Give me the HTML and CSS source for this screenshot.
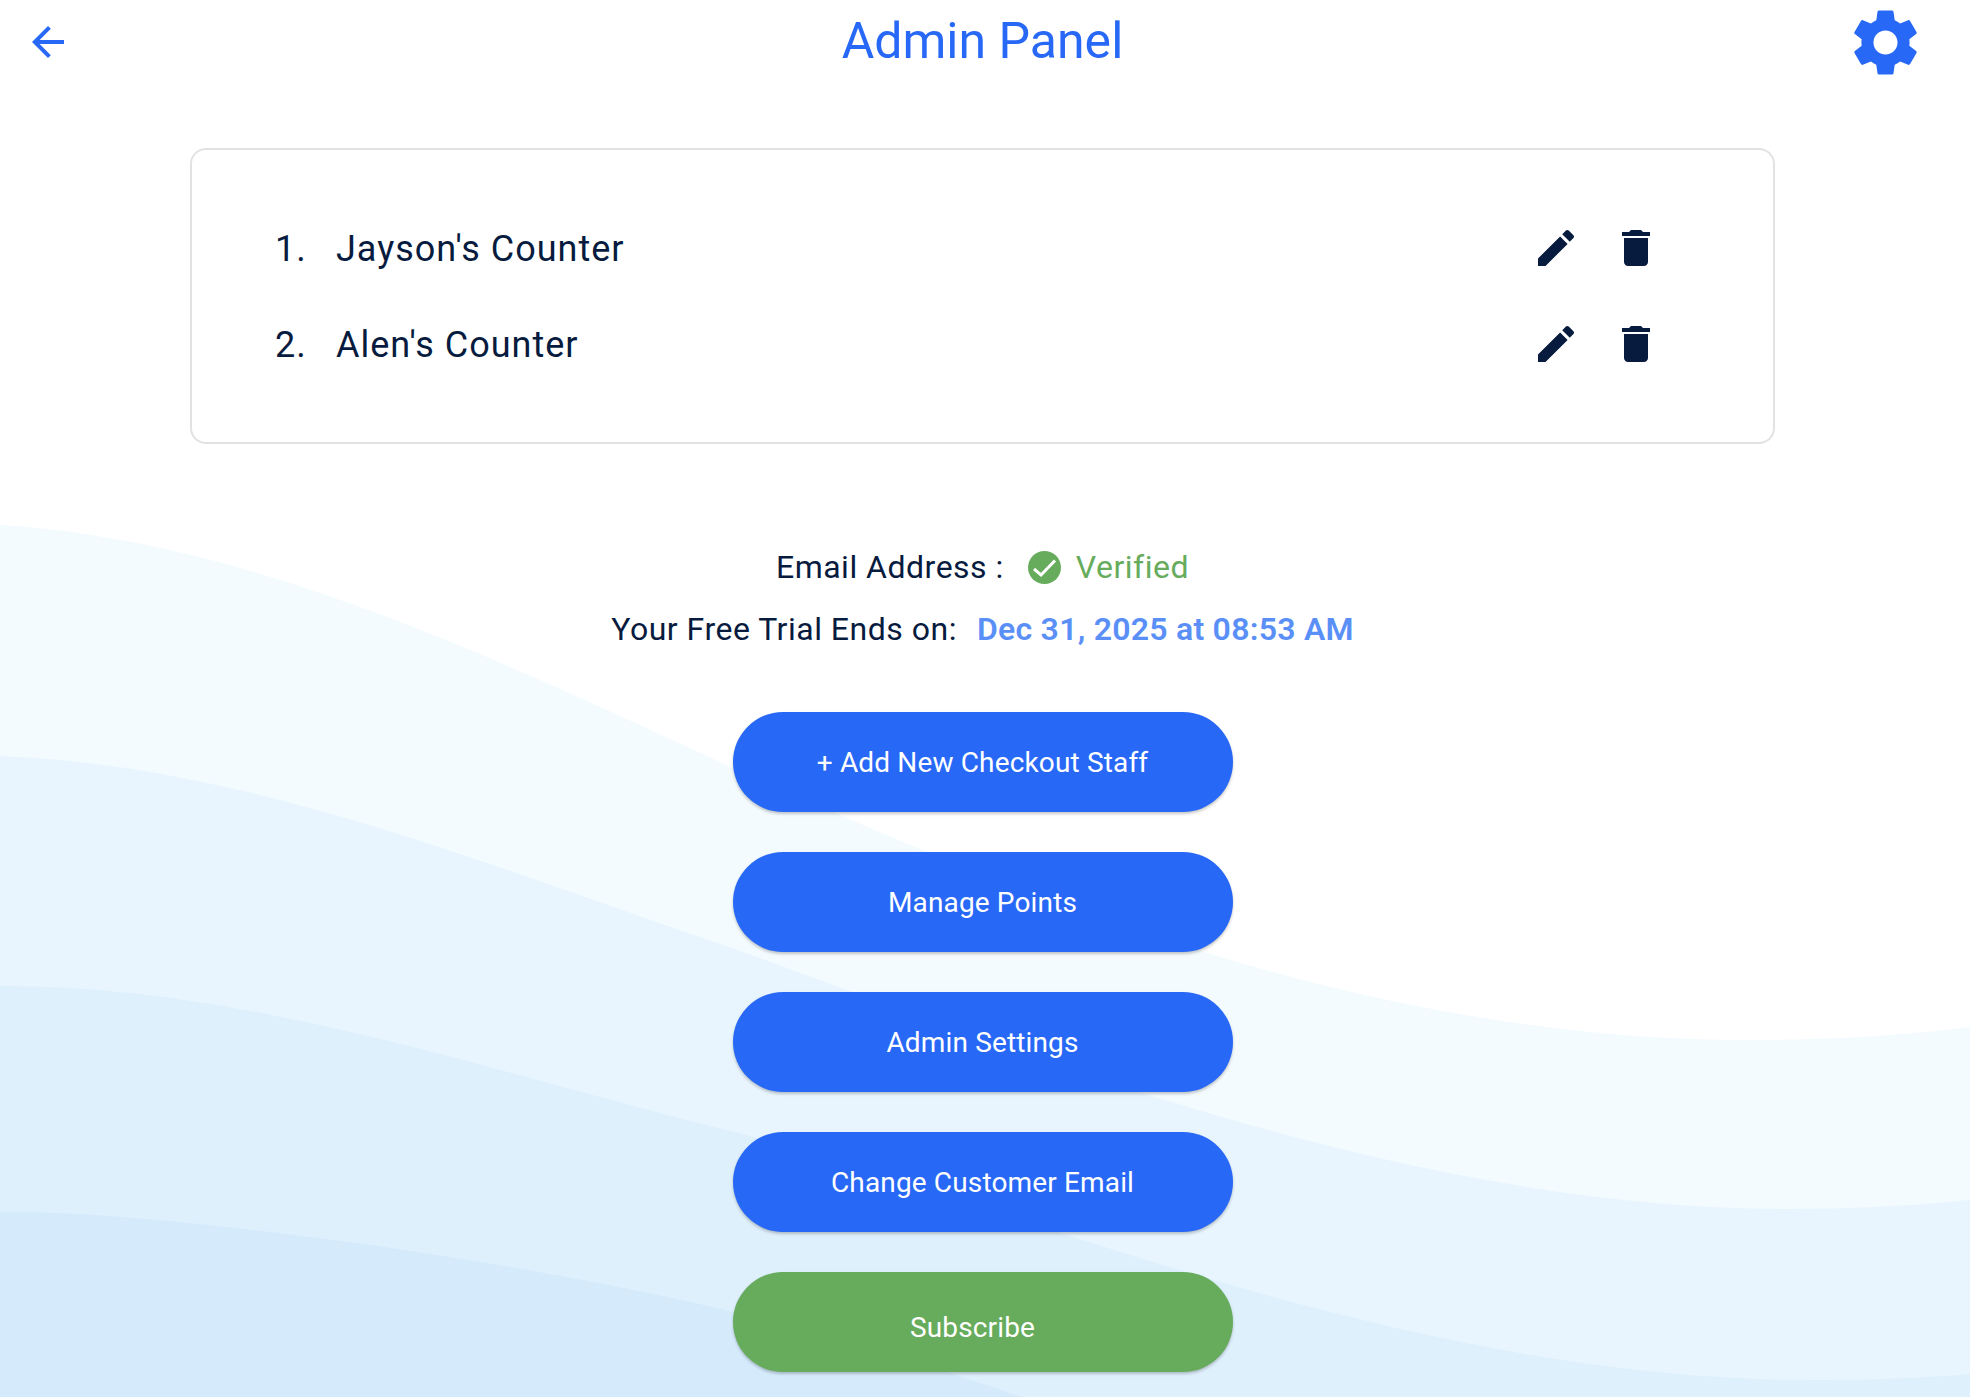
FILE: index.html
```html
<!DOCTYPE html>
<html lang="en">
<head>
<meta charset="utf-8">
<title>Admin Panel</title>
<link rel="stylesheet" href="styles.css">
</head>
<body>
<svg class="waves" viewBox="0 0 1970 1397" preserveAspectRatio="none" aria-hidden="true">
  <path class="wave-1" d="M0 525C250 540 500 660 735 769C1000 886 1350 1040 1750 1040C1830 1040 1900 1036 1970 1027V1397H0Z"/>
  <path class="wave-2" d="M0 756C250 765 500 870 735 949C1000 1045 1400 1209 1788 1209C1850 1209 1910 1206 1970 1200V1397H0Z"/>
  <path class="wave-3" d="M0 986C250 985 500 1075 735 1132C1000 1200 1400 1380 1812 1380C1870 1380 1920 1378 1970 1374V1397H0Z"/>
  <path class="wave-4" d="M0 1212C100 1208 450 1245 735 1312C850 1339 950 1372 1021 1397H0Z"/>
</svg>
<div class="page">
  <header class="topbar">
    <button class="icon-btn" aria-label="Back">
      <svg class="icon-back" viewBox="0 0 24 24"><path d="M20 11H7.830l5.590-5.590L12 4l-8 8 8 8 1.410-1.410L7.830 13H20v-2z"/></svg>
    </button>
    <h1 class="title">Admin Panel</h1>
    <button class="icon-btn icon-btn-end" aria-label="Settings">
      <svg class="icon-gear" viewBox="0 0 24 24"><path d="M19.43 12.98c.04-.32.07-.64.07-.98s-.03-.66-.07-.98l2.11-1.65c.19-.15.24-.42.12-.64l-2-3.46c-.12-.22-.39-.3-.61-.22l-2.49 1c-.52-.4-1.08-.73-1.69-.98l-.38-2.65C14.46 2.18 14.25 2 14 2h-4c-.25 0-.46.18-.49.42l-.38 2.65c-.61.25-1.17.59-1.69.98l-2.49-1c-.23-.09-.49 0-.61.22l-2 3.46c-.13.22-.07.49.12.64l2.11 1.65c-.04.32-.07.65-.07.98s.03.66.07.98l-2.11 1.65c-.19.15-.24.42-.12.64l2 3.46c.12.22.39.3.61.22l2.49-1c.52.4 1.08.73 1.69.98l.38 2.65c.03.24.24.42.49.42h4c.25 0 .46-.18.49-.42l.38-2.65c.61-.25 1.17-.59 1.69-.98l2.49 1c.23.09.49 0 .61-.22l2-3.46c.12-.22.07-.49-.12-.64l-2.11-1.65zM12 15.75c-2.07 0-3.75-1.68-3.75-3.75s1.68-3.75 3.75-3.75 3.75 1.68 3.75 3.75-1.68 3.75-3.75 3.75z"/></svg>
    </button>
  </header>

  <section class="card">
    <div class="row">
      <span class="row-num">1.</span>
      <span class="row-name">Jayson's Counter</span>
      <div class="row-actions">
        <svg class="icon-row" viewBox="0 0 24 24"><path d="M3 17.25V21h3.75L17.81 9.94l-3.75-3.75L3 17.25zM20.71 7.04c.39-.39.39-1.02 0-1.41l-2.34-2.34c-.39-.39-1.02-.39-1.41 0l-1.83 1.83 3.75 3.75 1.83-1.83z"/></svg>
        <svg class="icon-row" viewBox="0 0 24 24"><path d="M6 19c0 1.1.9 2 2 2h8c1.1 0 2-.9 2-2V7H6v12zM19 4h-3.500l-1-1h-5l-1 1H5v2h14V4z"/></svg>
      </div>
    </div>
    <div class="row">
      <span class="row-num">2.</span>
      <span class="row-name">Alen's Counter</span>
      <div class="row-actions">
        <svg class="icon-row" viewBox="0 0 24 24"><path d="M3 17.25V21h3.75L17.81 9.94l-3.75-3.75L3 17.25zM20.71 7.04c.39-.39.39-1.02 0-1.41l-2.34-2.34c-.39-.39-1.02-.39-1.41 0l-1.83 1.83 3.75 3.75 1.83-1.83z"/></svg>
        <svg class="icon-row" viewBox="0 0 24 24"><path d="M6 19c0 1.1.9 2 2 2h8c1.1 0 2-.9 2-2V7H6v12zM19 4h-3.500l-1-1h-5l-1 1H5v2h14V4z"/></svg>
      </div>
    </div>
  </section>

  <section class="info">
    <div class="info-line">
      <span>Email Address :</span>
      <svg class="icon-check" viewBox="0 0 33 33"><circle class="check-disc" cx="16.500" cy="16.500" r="16.500"/><polyline class="check-mark" points="6,18 13,24 27,9.500"/></svg>
      <span class="verified">Verified</span>
    </div>
    <div class="info-line">
      <span>Your Free Trial Ends on:</span>
      <span class="trial-date">Dec 31, 2025 at 08:53 AM</span>
    </div>
  </section>

  <nav class="actions">
    <button class="pill">+ Add New Checkout Staff</button>
    <button class="pill">Manage Points</button>
    <button class="pill">Admin Settings</button>
    <button class="pill">Change Customer Email</button>
    <button class="pill pill-green"><span class="pill-offset">Subscribe</span></button>
  </nav>
</div>
</body>
</html>
```
FILE: styles.css
```css
* { box-sizing: border-box; }
html, body { margin: 0; padding: 0; height: 100%; }
body {
  background: #fff;
  font-family: Roboto, "Noto Sans", sans-serif;
  color: #071b3e;
  overflow: hidden;
  position: relative;
}
.waves { position: absolute; inset: 0; width: 100%; height: 100%; display: block; }
.wave-1 { fill: #f3fbff; }
.wave-2 { fill: #e8f5fe; }
.wave-3 { fill: #dff0fd; }
.wave-4 { fill: #d5ebfc; }

.page {
  position: relative;
  display: flex;
  flex-direction: column;
  align-items: center;
  padding-right: 5px;
}

.topbar {
  width: 100%;
  height: 80px;
  display: grid;
  grid-template-columns: 1fr auto 1fr;
  align-items: center;
  padding: 0 24px;
}
.icon-btn { border: 0; background: none; padding: 0; display: flex; justify-self: start; }
.icon-btn-end { justify-self: end; }
.icon-back { width: 48px; height: 48px; fill: #2868f6; margin-top: 3px; }
.icon-gear { width: 77px; height: 77px; fill: #2868f6; margin: 4px 17px 0 0; }
.title {
  margin: 0;
  font-size: 50px;
  font-weight: 400;
  line-height: 78px;
  color: #2868f6;
}

.card {
  margin-top: 68px;
  width: 1585px;
  height: 296px;
  border: 2px solid #e2e2e2;
  border-radius: 16px;
  background: #fff;
  padding: 74px 113px 0 83px;
  display: flex;
  flex-direction: column;
  gap: 48px;
}
.row { display: flex; align-items: center; height: 48px; font-size: 36px; letter-spacing: 1px; }
.row-num { width: 61px; }
.row-name { flex: 1; padding-top: 2px; }
.row-num { padding-top: 2px; }
.row-actions { display: flex; gap: 32px; }
.icon-row { width: 48px; height: 48px; fill: #071b3e; }

.info { margin-top: 104px; display: flex; flex-direction: column; align-items: center; gap: 24px; }
.info-line { display: flex; align-items: center; height: 38px; font-size: 32px; letter-spacing: .5px; }
.icon-check { width: 33px; height: 33px; margin: 0 15px 0 24px; }
.check-disc { fill: #66ac5c; }
.check-mark { fill: none; stroke: #fff; stroke-width: 3; }
.verified { color: #66ac5c; }
.trial-date { margin-left: 20px; color: #5a8ff8; font-weight: 600; letter-spacing: .25px; }

.actions { margin-top: 64px; display: flex; flex-direction: column; gap: 40px; }
.pill {
  width: 500px;
  height: 100px;
  border: 0;
  border-radius: 50px;
  background: #2868f6;
  color: #fff;
  font-family: inherit;
  font-size: 28px;
  font-weight: 450;
  letter-spacing: .15px;
  box-shadow: 0 2px 3px rgba(0, 0, 0, .22);
}
.pill-green { background: #66ac5c; }
.pill-offset { display: block; padding: 10px 20px 0 0; }
```
